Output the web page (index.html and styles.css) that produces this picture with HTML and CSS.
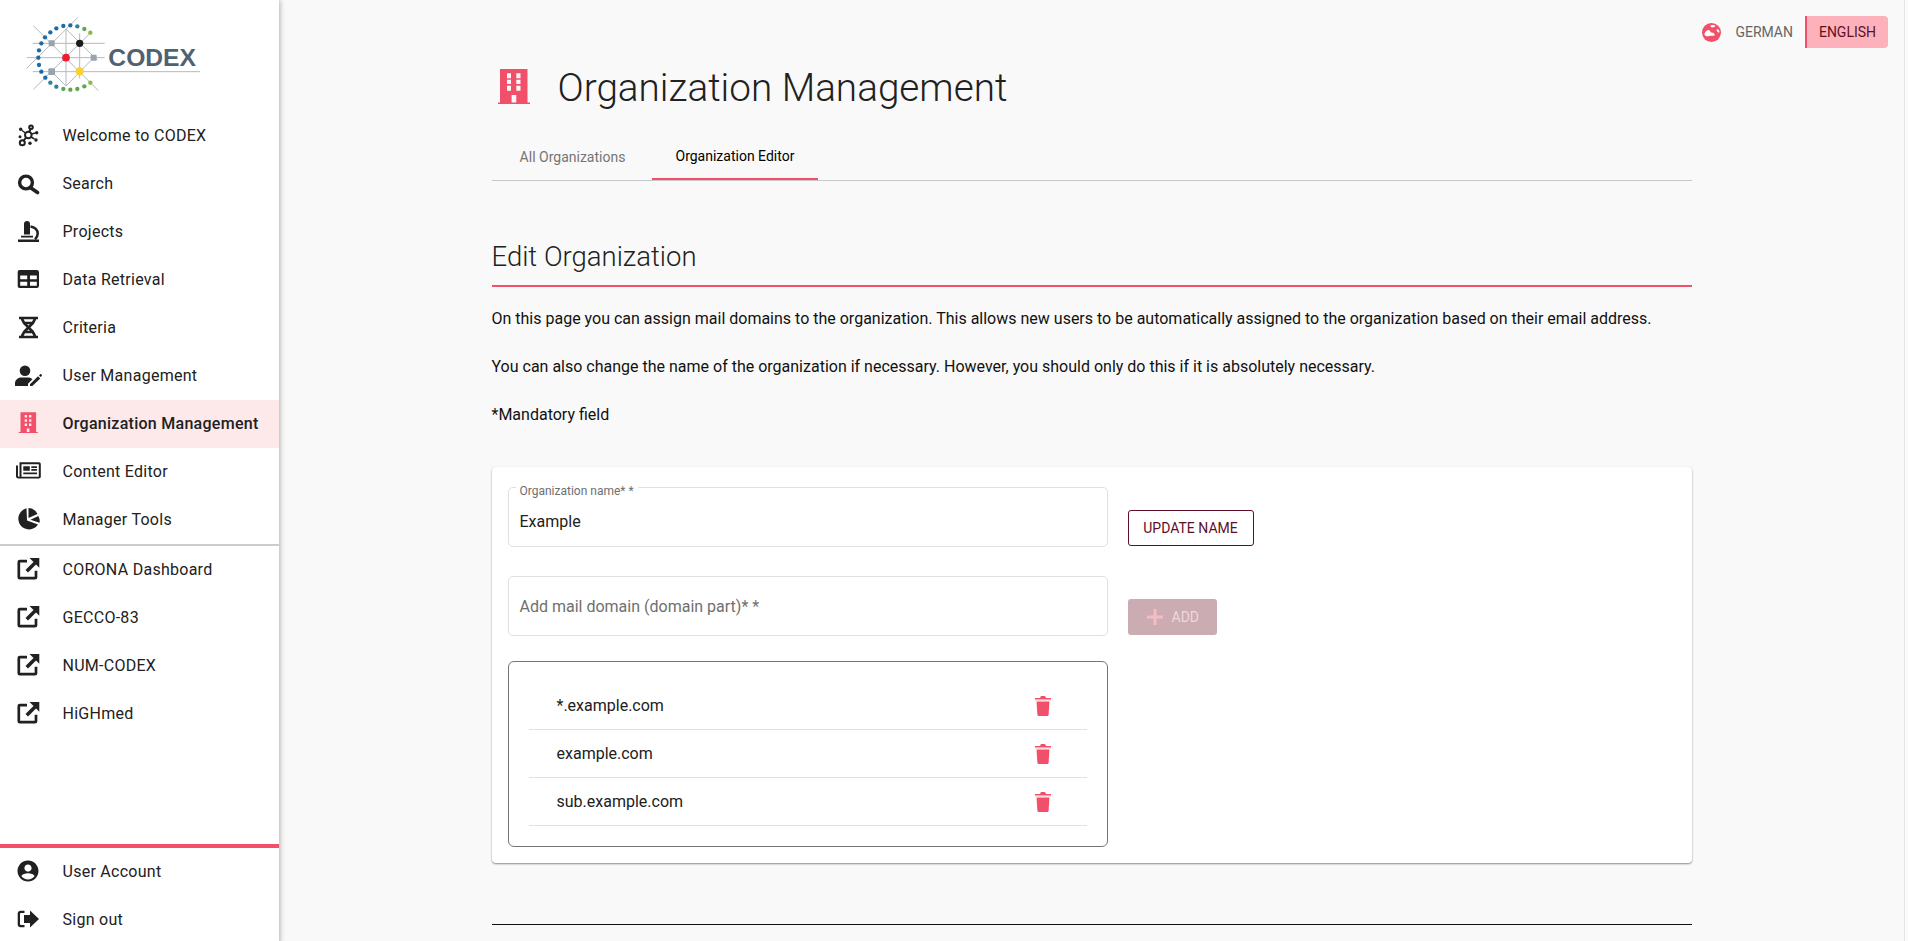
FILE: index.html
```html
<!DOCTYPE html>
<html lang="en">
<head>
<meta charset="utf-8">
<title>Organization Management</title>
<link rel="stylesheet" href="styles.css">
</head>
<body>
<div class="app">
  <aside class="sidebar">
    <div class="logo">
      <svg width="200" height="90" viewBox="0 0 600 270">
        <g stroke="#b4b9bf" stroke-width="3" fill="none">
          <path d="M68 100H284M50 143H284M68 185H570M168 57V228M209 70V205M70 47L265 242M204 22L50 175M70 238L245 65M168 57L262 151M251 143L168 228L125 185"/>
        </g>
        <g fill="#1f6aa5">
          <circle cx="160" cy="48" r="6.500"/><circle cx="181" cy="46" r="6.500"/><circle cx="139" cy="55" r="6.500"/><circle cx="121" cy="67" r="6.500"/><circle cx="105" cy="82" r="6.500"/><circle cx="94" cy="100" r="6.500"/><circle cx="87" cy="121" r="6.500"/><circle cx="85" cy="143" r="6.500"/><circle cx="87" cy="165" r="6.500"/><circle cx="94" cy="185" r="6.500"/><circle cx="106" cy="203" r="6.500"/>
        </g>
        <g fill="#2f8394"><circle cx="202" cy="49" r="6.500"/><circle cx="121" cy="218" r="6.500"/><circle cx="139" cy="230" r="6.500"/></g>
        <g fill="#5fa552"><circle cx="223" cy="57" r="6.500"/><circle cx="160" cy="237" r="6.500"/><circle cx="181" cy="239" r="6.500"/><circle cx="202" cy="237" r="6.500"/><circle cx="223" cy="229" r="6.500"/></g>
        <g fill="#86bc3c"><circle cx="241" cy="68" r="6.500"/><circle cx="241" cy="218" r="6.500"/></g>
        <g fill="#98a3ae"><rect x="116" y="91" width="18" height="18" rx="3"/><rect x="242" y="134" width="18" height="18" rx="3"/><rect x="115" y="175" width="20" height="20" rx="3"/></g>
        <circle cx="168" cy="143" r="11.500" fill="#ed1c2e"/><circle cx="209" cy="100" r="11" fill="#1a1a1a"/><circle cx="209" cy="184" r="12.500" fill="#fdd02f"/>
        <text class="logo-text" x="295" y="168">CODEX</text>
      </svg>
    </div>
    <nav class="nav">
      <a class="nav-item"><svg class="ico" viewBox="0 0 24 24"><g fill="none" stroke="#212121" stroke-width="2"><circle cx="12.300" cy="12" r="3.300"/><circle cx="6.300" cy="19.700" r="2.500"/><circle cx="15" cy="4.300" r="1.800"/><path d="M10 14.500l-2.200 3M13.300 8.800l1.200-2.800"/></g><g fill="#212121"><circle cx="4.700" cy="6.300" r="1.700"/><circle cx="20.700" cy="9.700" r="1.700"/><circle cx="20" cy="17" r="1.700"/><circle cx="14" cy="20.300" r="1.700"/><circle cx="4" cy="13.700" r="1.500"/></g><path stroke="#212121" stroke-width="1.500" d="M6 7.500l3.500 2.500M15.500 11l4-1M15 14l3.500 2"/></svg><span>Welcome to CODEX</span></a>
      <a class="nav-item"><svg class="ico" viewBox="0 0 24 24"><circle cx="10" cy="11.500" r="6.400" fill="none" stroke="#212121" stroke-width="3.400"/><path d="M15 17l6.500 4.500" stroke="#212121" stroke-width="3.600" stroke-linecap="round"/></svg><span>Search</span></a>
      <a class="nav-item"><svg class="ico" viewBox="0 0 24 24"><path fill="#212121" d="M8 5a3 3 0 0 1 6 0v10.500H8zM5 16.800h12v1.700H5zM2 20.500h21V23H2z"/><path fill="none" stroke="#212121" stroke-width="2.500" d="M14.500 7.500c4.500.5 7.200 3.800 7.200 7 0 2.200-1 4.200-2.700 5.700"/></svg><span>Projects</span></a>
      <a class="nav-item"><svg class="ico" viewBox="0 0 24 24"><path fill="#212121" fill-rule="evenodd" d="M3.500 3h17.300A2.200 2.200 0 0 1 23 5.200v13.600a2.200 2.200 0 0 1-2.200 2.200H3.500a1.800 1.800 0 0 1-1.800-1.800V4.800A1.800 1.800 0 0 1 3.500 3zM4.200 8.500v3.800h7v-3.800zM14 8.500v3.800h6.800v-3.800zM4.200 14.700v4h7v-4zM14 14.700v4h6.800v-4z"/></svg><span>Data Retrieval</span></a>
      <a class="nav-item"><svg class="ico" viewBox="0 0 24 24"><path fill="none" stroke="#212121" stroke-width="2.700" d="M3 3h19M3 22h19M6 3c0 7 13 12 13 19M19 3c0 7-13 12-13 19M7 8h11M7 17h11"/></svg><span>Criteria</span></a>
      <a class="nav-item"><svg class="ico ico-wide" viewBox="0 0 28 24"><circle cx="11" cy="7.700" r="5.300" fill="#212121"/><path fill="#212121" d="M1 23v-2.500c0-3.500 3-6 6-6h7c1.700 0 3.300.6 4.400 1.700L14 20.800V23z"/><path fill="#212121" d="M16 23v-1.800l8-8 2.300 2.300-8 7.500zM25 12.400l1-1c.4-.4 1-.4 1.300 0l.4.400c.4.400.4 1 0 1.300l-1 1z"/></svg><span>User Management</span></a>
      <a class="nav-item active"><svg class="ico" viewBox="0 0 24 24"><path fill="#f2506a" fill-rule="evenodd" d="M4.500 1.300h15.600V21h1.600v1H2.800v-1h1.700zM8.700 4v2.500h2.400V4zM13 4v2.500h2.400V4zM8.700 8.300v2.400h2.400V8.300zM13 8.300v2.400h2.400V8.300zM8.700 12.500V15h2.400v-2.500zM13 12.500V15h2.400v-2.500zM10.800 17.500V21h2.600v-3.500z"/></svg><span>Organization Management</span></a>
      <a class="nav-item"><svg class="ico ico-wide" viewBox="0 0 28 24"><path fill="#212121" fill-rule="evenodd" d="M5.500 3.300H25a1.800 1.800 0 0 1 1.800 1.800v12.600a1.800 1.800 0 0 1-1.800 1.800H4.500A2.500 2.500 0 0 1 2 17V6.500h2V17c0 .5.400.700.700.700h.8zM7.500 5.300v12.500h17.300V5.300zM9.300 7.300h6.500v4.500H9.300zM17.300 7.300H23v1.800h-5.700zM17.300 10H23v1.800h-5.700zM9.300 13.500H23v1.800H9.300z"/></svg><span>Content Editor</span></a>
      <a class="nav-item"><svg class="ico" viewBox="0 0 24 24"><path fill="#212121" d="M10.500 1.300A10.700 10.700 0 1 0 22 17.500L11 13.500zM12.500 1A10.500 10.500 0 0 1 21.500 7L12.500 11zM22.300 9A10.500 10.500 0 0 1 23.600 15.700L14.500 12.800z"/></svg><span>Manager Tools</span></a>
    </nav>
    <nav class="nav nav-links">
      <a class="nav-item"><svg class="ico" viewBox="0 0 24 24"><path fill="none" stroke="#212121" stroke-width="2.700" d="M11 4.200H3.800a1 1 0 0 0-1 1v15a1 1 0 0 0 1 1H19a1 1 0 0 0 1-1v-6.500"/><path fill="#212121" d="M13.500 1h9.800v9.800L20 7.500l-8 8-2.500-2.500 8-8z"/></svg><span>CORONA Dashboard</span></a>
      <a class="nav-item"><svg class="ico" viewBox="0 0 24 24"><path fill="none" stroke="#212121" stroke-width="2.700" d="M11 4.200H3.800a1 1 0 0 0-1 1v15a1 1 0 0 0 1 1H19a1 1 0 0 0 1-1v-6.500"/><path fill="#212121" d="M13.500 1h9.800v9.800L20 7.500l-8 8-2.500-2.500 8-8z"/></svg><span>GECCO-83</span></a>
      <a class="nav-item"><svg class="ico" viewBox="0 0 24 24"><path fill="none" stroke="#212121" stroke-width="2.700" d="M11 4.200H3.800a1 1 0 0 0-1 1v15a1 1 0 0 0 1 1H19a1 1 0 0 0 1-1v-6.500"/><path fill="#212121" d="M13.500 1h9.800v9.800L20 7.500l-8 8-2.500-2.500 8-8z"/></svg><span>NUM-CODEX</span></a>
      <a class="nav-item"><svg class="ico" viewBox="0 0 24 24"><path fill="none" stroke="#212121" stroke-width="2.700" d="M11 4.200H3.800a1 1 0 0 0-1 1v15a1 1 0 0 0 1 1H19a1 1 0 0 0 1-1v-6.500"/><path fill="#212121" d="M13.500 1h9.800v9.800L20 7.500l-8 8-2.500-2.500 8-8z"/></svg><span>HiGHmed</span></a>
    </nav>
    <nav class="nav nav-bottom">
      <a class="nav-item"><svg class="ico" viewBox="0 0 24 24"><path fill="#212121" d="M12 1.500C6.200 1.500 1.500 6.200 1.500 12S6.200 22.500 12 22.500 22.500 17.800 22.500 12 17.800 1.500 12 1.500zm0 4c2 0 3.600 1.600 3.600 3.600S14 12.700 12 12.700 8.400 11.100 8.400 9.100 10 5.500 12 5.500zm0 15c-2.700 0-5.100-1.200-6.600-3.200.1-2 4.400-3.100 6.600-3.100s6.500 1.100 6.600 3.100c-1.500 2-3.900 3.200-6.600 3.200z"/></svg><span>User Account</span></a>
      <a class="nav-item"><svg class="ico" viewBox="0 0 24 24"><path fill="#212121" d="M14 3.500l9 8.500-9 8.500V16H8V8h6zM8.500 3.700v2.300H5c-.5 0-1 .5-1 1v10c0 .5.500 1 1 1h3.500v2.300H4.500c-1.600 0-2.800-1.200-2.800-2.800V6.500c0-1.600 1.200-2.800 2.800-2.800z"/></svg><span>Sign out</span></a>
    </nav>
  </aside>

  <main class="main">
    <div class="lang">
      <svg class="globe" viewBox="0 0 24 24"><circle cx="12" cy="12" r="12" fill="#f2506a"/><path fill="#fff" d="M3 14c1-3 3.500-5.500 6-5 2 .4 1 2.500 3 3 2 .5 4.500 1 4 3-.4 1.600-2 1-4 1-3 0-5 1.500-7 .5-1-.5-2-1.500-2-2.500zM11 3c2-.8 5-.5 6 .5-.5 1.500-3 2.500-5 2-1-.3-1.500-1.700-1-2.500zM19 8c1.500-.3 3 1 3 3s-1.500 1-2.500 0-1.500-2.800-.5-3z"/></svg>
      <button class="lang-btn">GERMAN</button>
      <button class="lang-btn lang-on">ENGLISH</button>
    </div>
    <div class="content">
      <header class="title-row">
        <svg class="title-ico" viewBox="0 0 32 35"><path fill="#f2506a" fill-rule="evenodd" d="M2 0h27.500v33.500H32V35H0v-1.500h2zM9 4.300v5h4v-5zM18.300 4.300v5h4.200v-5zM9 10.700V15h4v-4.300zM18.300 10.700V15h4.200v-4.300zM9 16.700v5h4v-5zM18.300 16.700v5h4.200v-5zM13.600 26v7.500h4.700V26z"/></svg>
        <h1>Organization Management</h1>
      </header>
      <div class="tabs">
        <a class="tab">All Organizations</a>
        <a class="tab tab-on">Organization Editor</a>
      </div>
      <h2>Edit Organization</h2>
      <p>On this page you can assign mail domains to the organization. This allows new users to be automatically assigned to the organization based on their email address.</p>
      <p>You can also change the name of the organization if necessary. However, you should only do this if it is absolutely necessary.</p>
      <p>*Mandatory field</p>
      <section class="card">
        <div class="form-row">
          <div class="field"><span class="field-label">Organization name* *</span><span class="field-value">Example</span></div>
          <button class="btn btn-outline">UPDATE NAME</button>
        </div>
        <div class="form-row">
          <div class="field"><span class="field-ph">Add mail domain (domain part)* *</span></div>
          <button class="btn btn-off"><svg class="plus" viewBox="0 0 16 16"><path fill="#f6bcc6" d="M6.500 0h3v6.500H16v3H9.500V16h-3V9.500H0v-3h6.500z"/></svg>ADD</button>
        </div>
        <div class="list-box">
          <div class="list-row"><span>*.example.com</span><svg class="trash" viewBox="0 0 24 24"><path fill="#f2506a" d="M5.500 7.500h13l-.9 13c-.1 1-.8 1.500-1.600 1.500H8c-.8 0-1.500-.5-1.600-1.500z"/><path fill="#f2506a" d="M4 4h5l1-2h4l1 2h5v1H4z"/><rect x="4" y="5" width="16" height="1.400" fill="#f9a5b3"/></svg></div>
          <div class="list-row"><span>example.com</span><svg class="trash" viewBox="0 0 24 24"><path fill="#f2506a" d="M5.500 7.500h13l-.9 13c-.1 1-.8 1.500-1.600 1.500H8c-.8 0-1.500-.5-1.600-1.500z"/><path fill="#f2506a" d="M4 4h5l1-2h4l1 2h5v1H4z"/><rect x="4" y="5" width="16" height="1.400" fill="#f9a5b3"/></svg></div>
          <div class="list-row"><span>sub.example.com</span><svg class="trash" viewBox="0 0 24 24"><path fill="#f2506a" d="M5.500 7.500h13l-.9 13c-.1 1-.8 1.500-1.600 1.500H8c-.8 0-1.500-.5-1.600-1.500z"/><path fill="#f2506a" d="M4 4h5l1-2h4l1 2h5v1H4z"/><rect x="4" y="5" width="16" height="1.400" fill="#f9a5b3"/></svg></div>
        </div>
      </section>
      <hr class="rule">
    </div>
  </main>
</div>
</body>
</html>
```

FILE: styles.css
```css
* { box-sizing: border-box; }
html, body { margin: 0; height: 100%; overflow: hidden; }
body { font-family: Roboto, "Liberation Sans", sans-serif; color: #212121; background: #fbfbfb; }
.app { display: flex; height: 944px; }

.sidebar { width: 279px; flex: none; background: #fff; display: flex; flex-direction: column; box-shadow: 1px 0 5px rgba(0,0,0,.3); position: relative; z-index: 1; }
.logo { height: 112px; padding: 10px 0 0 10px; }
.logo svg { display: block; }
.logo-text { font-family: "Liberation Sans", Arial, sans-serif; font-weight: 700; font-size: 74px; fill: #4f6272; }
.nav-links { border-top: 2px solid #ccc; }
.nav-bottom { margin-top: auto; border-top: 4px solid #f2506a; }
.nav-item { display: flex; align-items: center; height: 48px; padding: 0 0 2px 16px; font-size: 16px; letter-spacing: .27px; color: #212121; }
.nav-item span { margin-left: 22.5px; }
.nav-item.active { background: #fde8ea; font-weight: 500; }
.ico { width: 24px; height: 24px; flex: none; }
.ico-wide { width: 28px; margin-left: -2px; margin-right: -2px; }

.main { flex: 1; min-width: 0; position: relative; margin-right: 3px; background: #f9f9f9; border-right: 1px solid #e4e4e4; }
.content { width: 1200px; margin: 0 auto; padding-top: 60px; }
.lang { position: absolute; top: 16px; right: 16px; display: flex; align-items: center; height: 32px; }
.globe { width: 19px; height: 19px; margin-right: 3px; }
.lang-btn { border: 0; background: none; font: 400 14px Roboto, sans-serif; color: #666; height: 32px; padding: 0 12px 0 11px; }
.lang-on { background: #fdb2bb; color: #5f0f23; border-left: 2px solid #f2506a; border-radius: 0 4px 4px 0; width: 83px; padding: 0; }

.title-row { display: flex; align-items: center; height: 54px; padding-left: 6.5px; }
.title-ico { width: 32px; height: 35px; flex: none; margin-top: -1px; }
h1 { margin: 2px 0 0 27.5px; font-size: 38.7px; font-weight: 300; line-height: 54px; color: #212121; }
.tabs { display: flex; margin-top: 18px; height: 49px; border-bottom: 1px solid #c8c8c8; }
.tab { display: flex; align-items: center; justify-content: center; height: 48px; min-width: 160px; padding: 2px 23px 0 25px; font-size: 14px; color: #757575; }
.tab-on { color: #000; border-bottom: 2px solid #f2506a; padding: 2px 24px 0; }
h2 { margin: 57px 0 0; padding: 1px 0 10px; font-size: 27.5px; font-weight: 300; line-height: 36px; border-bottom: 2px solid #f2506a; color: #212121; }
p { margin: 20px 0 24px; font-size: 16px; line-height: 24px; color: #111; }
p + p { margin-top: 0; }
p:nth-of-type(3) { margin-bottom: 40px; }

.card { background: #fff; border-radius: 4px; box-shadow: 0 1px 2px rgba(0,0,0,.45); padding: 20px 16px 16px; }
.form-row { display: flex; align-items: flex-end; gap: 20px; margin-bottom: 29px; }
.form-row + .form-row { margin-bottom: 25px; }
.field { position: relative; width: 600px; height: 60px; border: 1px solid #e0e0e0; border-radius: 5px; display: flex; align-items: center; padding: 0 11px; }
.field-label { position: absolute; left: 7px; top: -4px; padding: 0 4px; background: #fff; font-size: 12px; line-height: 14px; color: #6f6f6f; }
.field-value { font-size: 16px; color: #212121; padding-top: 9px; }
.field-ph { font-size: 16px; color: #6f6f6f; }
.btn { height: 36px; margin-bottom: 1px; border-radius: 3px; font: 400 14px Roboto, sans-serif; display: flex; align-items: center; justify-content: center; padding: 0; }
.btn-outline { width: 126px; background: #fff; border: 1px solid #5f0f23; color: #5f0f23; }
.btn-off { width: 89px; background: #ccacb3; border: 0; color: #ecd8dc; justify-content: flex-start; padding-left: 19px; gap: 9px; }
.plus { width: 16px; height: 16px; }

.list-box { width: 600px; border: 1px solid #757575; border-radius: 6px; padding: 20px 20px 20px; }
.list-row { display: flex; align-items: center; justify-content: space-between; height: 48px; padding: 0 32px 0 28px; border-bottom: 1px solid #e0e0e0; font-size: 16px; color: #212121; }
.trash { width: 24px; height: 24px; }
.rule { border: 0; border-top: 1px solid #111; margin: 61px 0 0; }
```
